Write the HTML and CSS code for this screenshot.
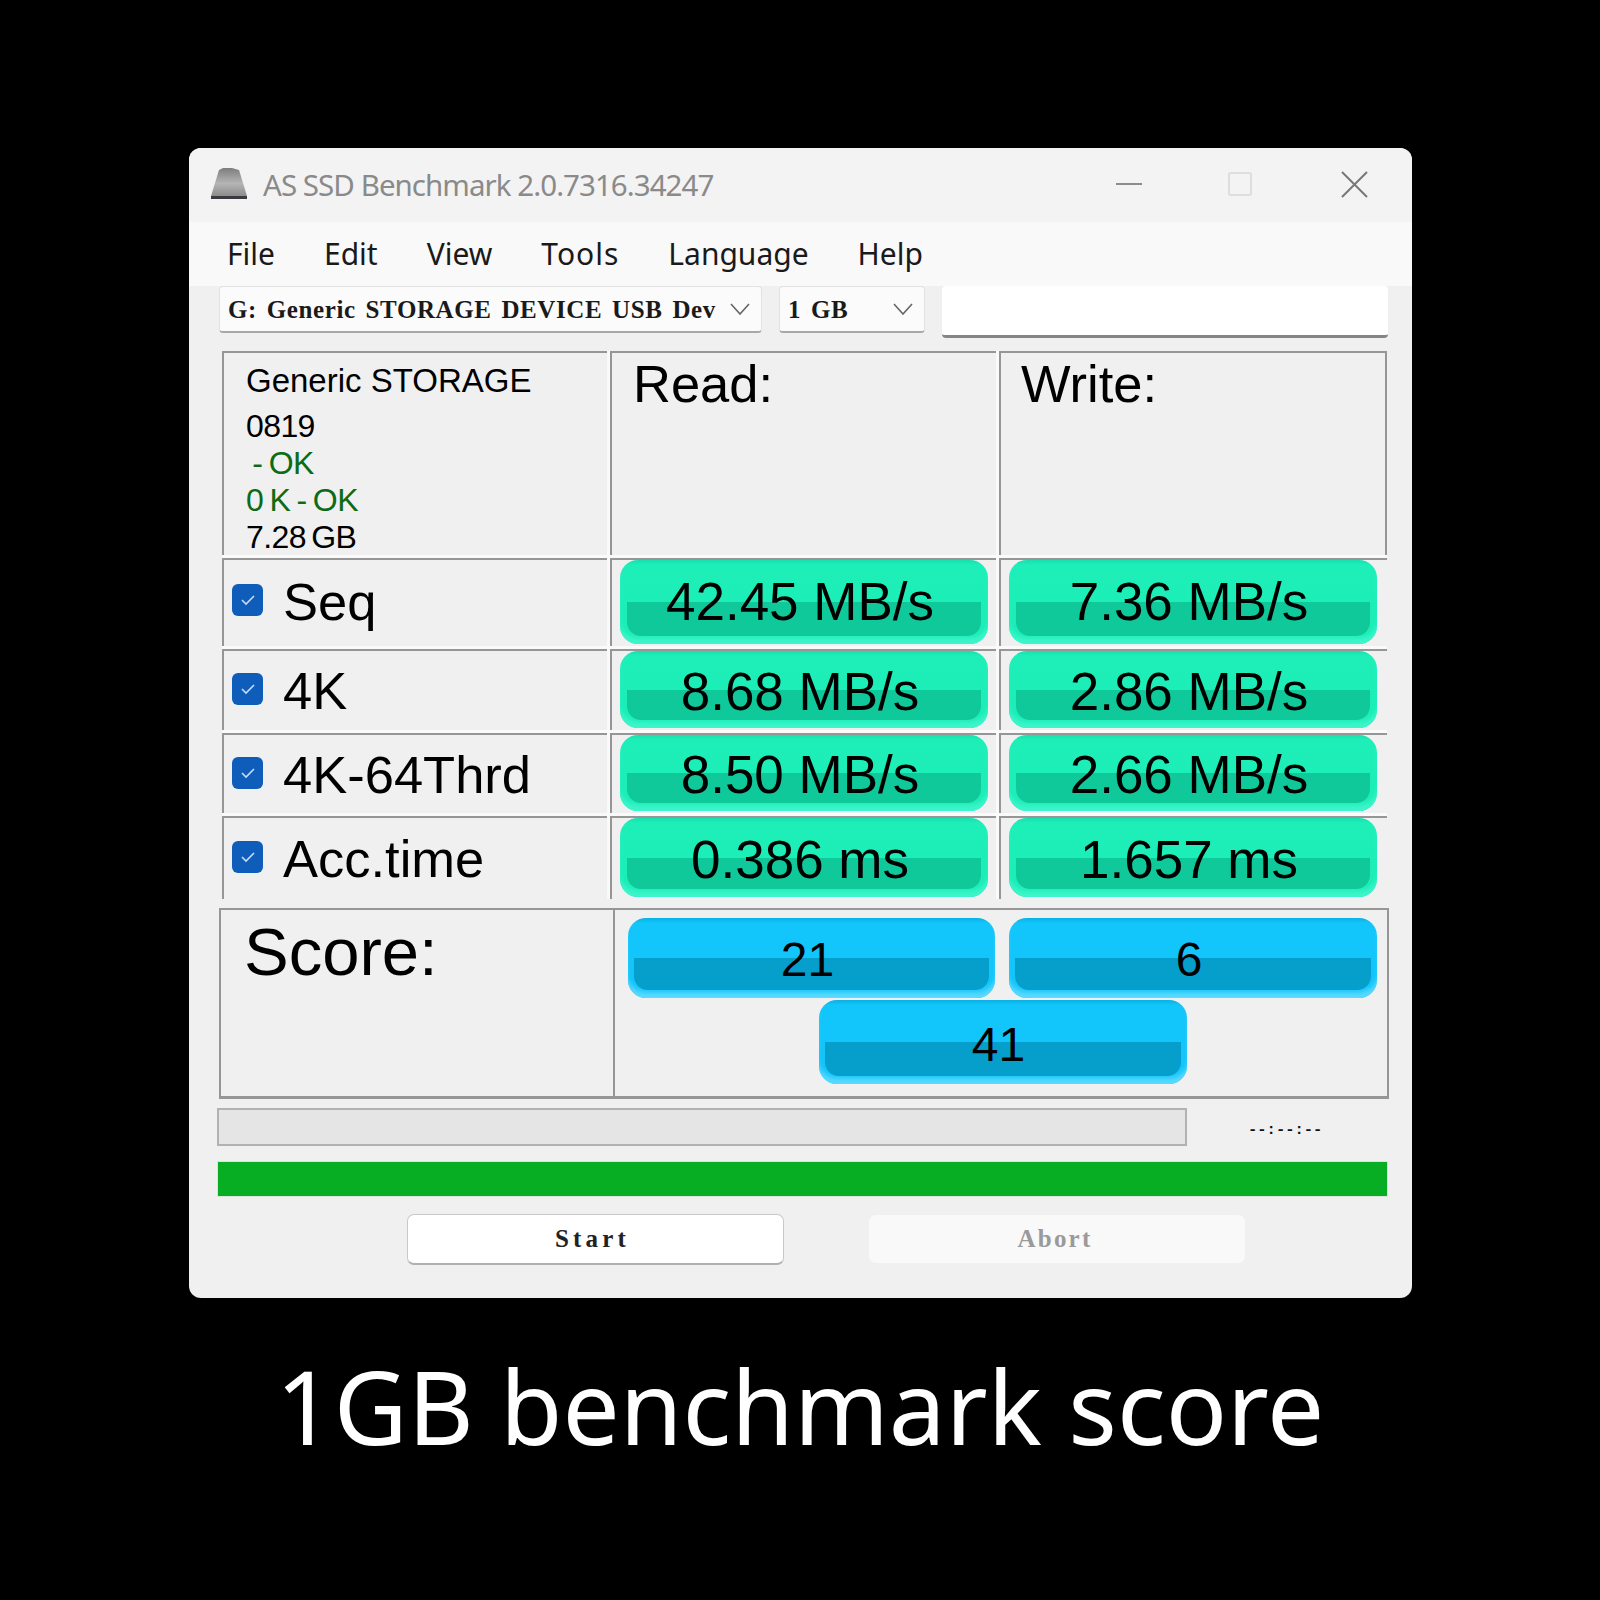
FILE: index.html
```html
<!DOCTYPE html>
<html lang="en">
<head>
<meta charset="utf-8">
<title>AS SSD Benchmark</title>
<link rel="stylesheet" href="styles.css">
</head>
<body>
<main class="page">
  <section class="window">
    <header class="titlebar">
      <svg class="app-icon" width="38" height="32" viewBox="0 0 38 32">
        <defs><linearGradient id="disk" x1="0" y1="0" x2="0" y2="1"><stop offset="0" stop-color="#7d7d7d"/><stop offset=".55" stop-color="#b5b5b5"/><stop offset="1" stop-color="#8c8c8c"/></linearGradient></defs>
        <path d="M9 2 L13 0 L22 0 L29 2 L37 28 L1 28 Z" fill="url(#disk)"/>
        <rect x="1" y="28" width="36" height="3" fill="#3a3a40"/>
      </svg>
      <h1 class="title">AS SSD Benchmark 2.0.7316.34247</h1>
      <div class="controls">
        <svg class="ctl-min" width="26" height="4" viewBox="0 0 26 4"><rect y="1" width="26" height="2" fill="#8c8c8c"/></svg>
        <svg class="ctl-max" width="24" height="24" viewBox="0 0 24 24"><rect x="1" y="1" width="22" height="22" rx="2" fill="none" stroke="#dedede" stroke-width="2"/></svg>
        <svg class="ctl-close" width="27" height="27" viewBox="0 0 27 27"><path d="M1 1 L26 26 M26 1 L1 26" fill="none" stroke="#777" stroke-width="2"/></svg>
      </div>
    </header>
    <nav class="menubar">
      <span>File</span><span>Edit</span><span>View</span><span class="menu-tools">Tools</span><span>Language</span><span>Help</span>
    </nav>
    <div class="toolbar">
      <div class="combo combo-drive"><span class="combo-text">G: Generic STORAGE DEVICE USB Dev</span>
        <svg width="20" height="12" viewBox="0 0 20 12"><path d="M1 1 L10 11 L19 1" fill="none" stroke="#666" stroke-width="1.6"/></svg></div>
      <div class="combo combo-size"><span class="combo-text">1 GB</span>
        <svg width="20" height="12" viewBox="0 0 20 12"><path d="M1 1 L10 11 L19 1" fill="none" stroke="#666" stroke-width="1.6"/></svg></div>
      <div class="field"></div>
    </div>
    <div class="board">
      <div class="cell info">
        <div class="info-name">Generic STORAGE</div>
        <div class="info-line">0819</div>
        <div class="info-line ok">&nbsp;- OK</div>
        <div class="info-line ok">0 K - OK</div>
        <div class="info-line">7.28 GB</div>
      </div>
      <div class="cell heading heading-read">Read:</div>
      <div class="cell heading heading-write">Write:</div>

      <div class="cell label label-seq"><span class="check"><svg width="16" height="12" viewBox="0 0 16 12"><path d="M2 6 L6 10 L14 2" fill="none" stroke="#c9dcf2" stroke-width="1.6"/></svg></span>Seq</div>
      <div class="cell value"><div class="bar bar-seq">42.45 MB/s</div></div>
      <div class="cell value value-write"><div class="bar bar-seq">7.36 MB/s</div></div>

      <div class="cell label"><span class="check"><svg width="16" height="12" viewBox="0 0 16 12"><path d="M2 6 L6 10 L14 2" fill="none" stroke="#c9dcf2" stroke-width="1.6"/></svg></span>4K</div>
      <div class="cell value"><div class="bar">8.68 MB/s</div></div>
      <div class="cell value value-write"><div class="bar">2.86 MB/s</div></div>

      <div class="cell label"><span class="check"><svg width="16" height="12" viewBox="0 0 16 12"><path d="M2 6 L6 10 L14 2" fill="none" stroke="#c9dcf2" stroke-width="1.6"/></svg></span>4K-64Thrd</div>
      <div class="cell value"><div class="bar">8.50 MB/s</div></div>
      <div class="cell value value-write"><div class="bar">2.66 MB/s</div></div>

      <div class="cell label"><span class="check"><svg width="16" height="12" viewBox="0 0 16 12"><path d="M2 6 L6 10 L14 2" fill="none" stroke="#c9dcf2" stroke-width="1.6"/></svg></span>Acc.time</div>
      <div class="cell value"><div class="bar">0.386 ms</div></div>
      <div class="cell value value-write"><div class="bar">1.657 ms</div></div>
    </div>
    <div class="score">
      <div class="score-label">Score:</div>
      <div class="score-values">
        <div class="bar bar-score">21</div>
        <div class="bar bar-score">6</div>
        <div class="bar bar-score bar-total">41</div>
      </div>
    </div>
    <div class="progress-row">
      <div class="progress"></div>
      <span class="time">--:--:--</span>
    </div>
    <div class="greenbar"></div>
    <div class="buttons">
      <div class="btn btn-start">Start</div>
      <div class="btn btn-abort">Abort</div>
    </div>
  </section>
  <p class="caption">1GB benchmark score</p>
</main>
</body>
</html>
```
FILE: styles.css
```css
* { box-sizing: border-box; }
html, body { margin: 0; padding: 0; background: #000; }
.page { width: 1600px; height: 1600px; background: #000; padding-top: 148px; overflow: hidden; }

.window {
  width: 1223px; height: 1150px; margin-left: 189px;
  background: #f0f0f0; border-radius: 12px; overflow: hidden;
  font-family: "Liberation Sans", Arial, sans-serif; color: #000;
}

.titlebar { height: 74px; background: #f3f3f3; display: flex; align-items: center; padding: 0 0 2px 21px; }
.app-icon { flex: none; }
.title { margin: 0 0 0 15px; font: 400 29.5px "Noto Sans", sans-serif; color: #8a8a8a; letter-spacing: -0.95px; white-space: nowrap; }
.controls { margin-left: auto; display: flex; align-items: center; padding-right: 44px; }
.ctl-min { margin-right: 86px; }
.ctl-max { margin-right: 89px; }

.menubar { height: 64px; background: #f9f9f9; display: flex; align-items: center; gap: 49px; padding: 0 0 2px 38px; font: 400 30px "Noto Sans", sans-serif; color: #1a1a1a; }
.menu-tools { letter-spacing: 1px; }

.toolbar { display: flex; align-items: flex-start; gap: 17px; padding-left: 30px; height: 51px; }
.combo { height: 47px; background: #fbfbfb; border: 1px solid #e2e2e2; border-bottom: 2px solid #a8a8a8; border-radius: 4px; display: flex; align-items: center; justify-content: space-between; padding: 0 11px 0 8px; }
.combo-text { margin-top: 2px; font: 700 25px "Liberation Serif", serif; letter-spacing: 0.6px; word-spacing: 3px; white-space: pre; color: #1a1a1a; }
.combo-drive { width: 543px; }
.combo-size { width: 146px; }
.field { width: 446px; height: 52px; background: #fff; border-bottom: 3px solid #858585; border-radius: 4px; }

.board { display: grid; grid-template-columns: 385px 386px 388px; grid-template-rows: 204px 88px 81px 80px 83px; gap: 3px; margin: 14px 0 0 33px; width: 1165px; background: #fafafa; }
.cell { border-top: 2px solid #969696; border-left: 2px solid #969696; min-width: 0; background: #f0f0f0; }
.info { padding: 9px 0 0 22px; overflow: hidden; }
.info-name { font-size: 33px; line-height: 38px; margin-bottom: 8px; }
.info-line { font-size: 32px; line-height: 37px; letter-spacing: -0.6px; word-spacing: -3px; }
.ok { color: #0b6b16; word-spacing: -2px; }
.heading { font-size: 52.5px; line-height: 60px; padding-top: 1px; }
.heading-read { padding-left: 21px; }
.heading-write { padding-left: 20px; border-right: 2px solid #969696; }
.label { display: flex; align-items: center; font-size: 52.5px; padding-left: 8px; }
.label-seq { padding-bottom: 4px; }
.check { width: 31px; height: 32px; background: #0f5dbb; border-radius: 6px; margin: 0 20px 3px 0; display: flex; align-items: center; justify-content: center; flex: none; }
.value { padding: 0 8px 2px 8px; display: flex; }
.value-write { padding-right: 10px; }

.bar {
  flex: 1; display: flex; align-items: center; justify-content: center; padding: 3px 8px 0 0;
  font-size: 53px; border-radius: 18px; position: relative; isolation: isolate;
  background: linear-gradient(180deg, #16dfae 0, #1eefb9 5px, #1bedb7 100%);
  box-shadow: inset 0 -8px 5px -2px #3ff5cb;
}
.bar-seq { padding: 0 8px 1px 0; }
.bar::before {
  content: ""; position: absolute; z-index: -1; left: 7px; right: 7px; top: 50%; bottom: 8px;
  background: #10c99b; border-radius: 0 0 14px 14px;
}

.score { display: grid; grid-template-columns: 392px 1fr; width: 1170px; height: 191px; margin: 9px 0 0 30px; border: 2px solid #969696; border-bottom-width: 3px; }
.score-label { font-size: 67px; line-height: 76px; padding: 4px 0 0 23px; }
.score-values { border-left: 2px solid #969696; padding: 8px 0 0 13px; display: grid; grid-template-columns: 367px 368px; grid-template-rows: 80px 84px; gap: 2px 14px; }
.bar-score {
  font-size: 48px; padding-top: 2px;
  background: linear-gradient(180deg, #08b0e4 0, #12c6fb 5px, #12c4fa 100%);
  box-shadow: inset 0 -8px 5px -2px #5bdaff;
}
.bar-score::before { background: #069ecb; left: 6px; right: 6px; }
.bar-total { grid-column: 1 / 3; justify-self: center; width: 368px; padding-top: 5px; }

.progress-row { display: flex; align-items: center; margin: 9px 0 0 28px; }
.progress { width: 970px; height: 38px; background: #e5e5e5; border: 2px solid #b2b2b2; }
.time { margin: 5px 0 0 61px; font: 700 15.5px "Liberation Mono", monospace; color: #111; }
.greenbar { width: 1171px; height: 36px; margin: 15px 0 0 28px; background: #07ae24; border: 1px solid #d8e6d8; }

.buttons { display: flex; align-items: flex-start; gap: 85px; margin: 17px 0 0 218px; }
.btn { display: flex; align-items: center; justify-content: center; border-radius: 7px; font: 700 25px "Liberation Serif", serif; }
.btn-start { width: 377px; height: 51px; padding-right: 6px; letter-spacing: 4.2px; background: #fff; border: 1px solid #c8c8c8; border-bottom: 2px solid #b0b0b0; color: #222; }
.btn-abort { width: 376px; height: 48px; padding-right: 4px; letter-spacing: 2.2px; margin-top: 1px; background: #f9f9f9; color: #9a9a9a; }

.caption { margin: 0; padding-top: 37px; text-align: center; color: #fff; font: 400 101.5px/141px "Noto Sans", sans-serif; }
```
